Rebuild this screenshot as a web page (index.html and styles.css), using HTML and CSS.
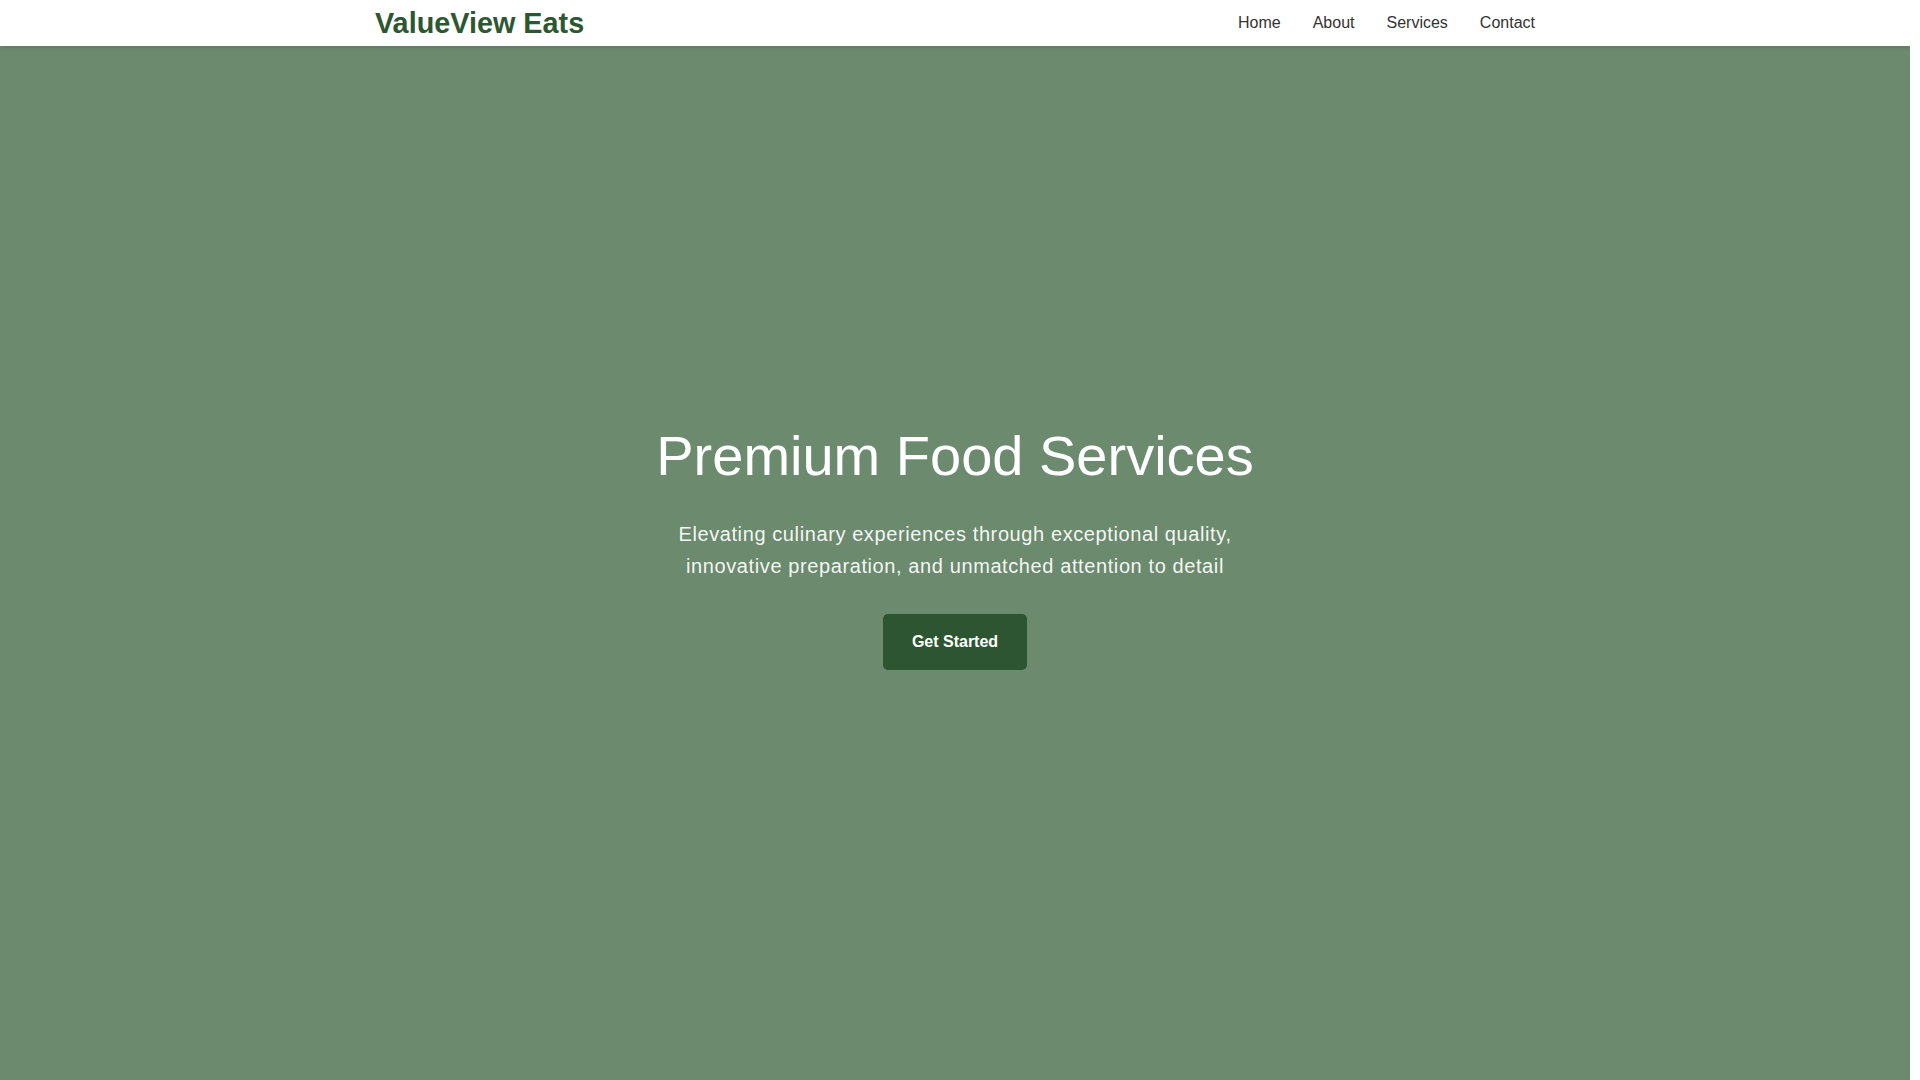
FILE: index.html
```html
<!doctype html>
<html lang="en">
  <head>
    <meta charset="UTF-8" />
    <meta name="viewport" content="width=device-width, initial-scale=1.0" />
    <title>ValueView Eats</title>
    <link rel="stylesheet" href="styles.css">
  </head>
  <body>
    <header class="site-header">
      <div class="container header-inner">
        <a href="#home" class="logo">ValueView Eats</a>
        <nav>
          <ul class="nav-links">
            <li><a href="#home">Home</a></li>
            <li><a href="#about">About</a></li>
            <li><a href="#services">Services</a></li>
            <li><a href="#contact">Contact</a></li>
          </ul>
        </nav>
      </div>
    </header>

    <section class="hero" id="home">
      <div class="hero-content">
        <h1>Premium Food Services</h1>
        <p>Elevating culinary experiences through exceptional quality, innovative preparation, and unmatched attention to detail</p>
        <a href="#services" class="btn">Get Started</a>
      </div>
    </section>
  </body>
</html>
```

FILE: styles.css
```css
* {
  margin: 0;
  padding: 0;
  box-sizing: border-box;
}

body {
  font-family: "Liberation Sans", Arial, sans-serif;
  color: #333;
  line-height: 1.6;
  background: #fff;
  /* keep a gutter on the right, as a scrollbar would */
  margin-right: 10px;
}

a {
  text-decoration: none;
  color: inherit;
}

.container {
  max-width: 1200px;
  margin: 0 auto;
  padding: 0 20px;
}

/* header */
.site-header {
  position: sticky;
  top: 0;
  z-index: 10;
  background: #fff;
  box-shadow: 0 2px 4px rgba(0, 0, 0, 0.12);
}

.header-inner {
  height: 46px;
  display: flex;
  align-items: center;
  justify-content: space-between;
}

.logo {
  font-size: 1.8rem;
  font-weight: 700;
  line-height: 1;
  color: #2d5730;
}

.nav-links {
  list-style: none;
  display: flex;
  gap: 2rem;
}

.nav-links a {
  font-size: 1rem;
  color: #333;
}

/* hero */
.hero {
  min-height: calc(100vh - 46px);
  padding-bottom: 34px;
  background: #6b8a6e;
  display: flex;
  align-items: center;
  justify-content: center;
  text-align: center;
  color: #fff;
}

.hero h1 {
  font-size: 3.5rem;
  font-weight: 400;
  line-height: 1.2;
  margin-bottom: 28px;
}

.hero p {
  max-width: 600px;
  margin: 0 auto 2rem;
  font-size: 1.25rem;
  line-height: 1.6;
  letter-spacing: 0.6px;
  color: rgba(255, 255, 255, 0.95);
}

.btn {
  display: inline-block;
  padding: 19px 29px;
  background: #2d5531;
  color: #fff;
  font-size: 1rem;
  font-weight: 700;
  line-height: normal;
  border-radius: 5px;
}
```
